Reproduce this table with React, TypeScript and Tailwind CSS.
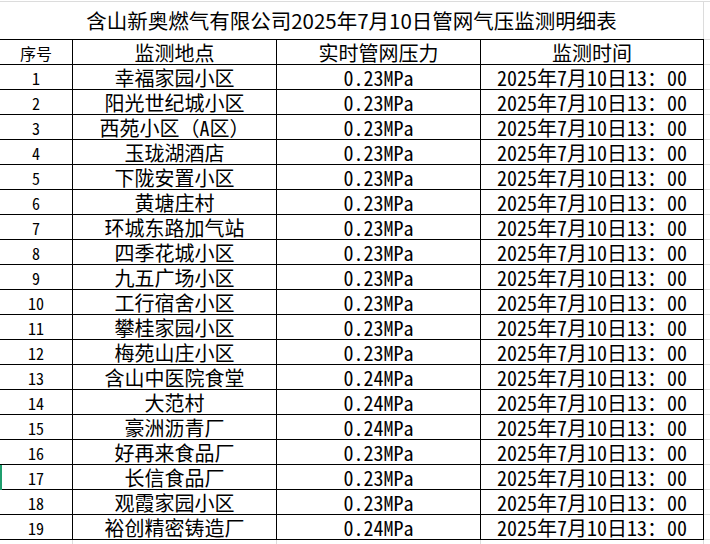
import React from "react";

const rows: [string, string][] = [
  ["幸福家园小区", "0.23"],
  ["阳光世纪城小区", "0.23"],
  ["西苑小区（A区）", "0.23"],
  ["玉珑湖酒店", "0.23"],
  ["下陇安置小区", "0.23"],
  ["黄塘庄村", "0.23"],
  ["环城东路加气站", "0.23"],
  ["四季花城小区", "0.23"],
  ["九五广场小区", "0.23"],
  ["工行宿舍小区", "0.23"],
  ["攀桂家园小区", "0.23"],
  ["梅苑山庄小区", "0.23"],
  ["含山中医院食堂", "0.24"],
  ["大范村", "0.24"],
  ["豪洲沥青厂", "0.24"],
  ["好再来食品厂", "0.23"],
  ["长信食品厂", "0.23"],
  ["观霞家园小区", "0.23"],
  ["裕创精密铸造厂", "0.24"],
];

const mono = "font-['Noto_Sans_Mono_CJK_SC','Noto_Sans_CJK_SC',sans-serif]";

export default function App() {
  return (
    <div className={`w-[710px] h-[544px] bg-white overflow-hidden text-black ${mono}`}>
      {/* title row */}
      <div className="flex h-[38px] border-t border-[#dcdcdc] mt-px">
        <div className="w-[704px] border-r border-[#dcdcdc] flex items-center justify-center text-[20.5px] leading-none font-['Noto_Sans_CJK_SC',sans-serif]">
          含山新奥燃气有限公司2025年7月10日管网气压监测明细表
        </div>
        <div className="flex-1" />
      </div>
      {/* header */}
      <div className="flex h-[26px]">
        <div className="flex w-[704px] border-t border-b border-black leading-none">
          <div className="w-[73px] border-r border-black flex items-center justify-center text-[16px] pt-[2px]">序号</div>
          <div className="w-[204px] border-r border-black flex items-center justify-center text-[20px] pt-[2px]">监测地点</div>
          <div className="w-[204px] border-r border-black flex items-center justify-center text-[20px] pt-[2px]">实时管网压力</div>
          <div className="w-[223px] border-r border-black flex items-center justify-center text-[20px] pt-[2px]">监测时间</div>
        </div>
        <div className="flex-1 flex flex-col justify-between">
          <div className="h-px bg-[#dcdcdc]" />
          <div className="h-px bg-[#dcdcdc]" />
        </div>
      </div>
      {rows.map(([name, p], i) => (
        <div key={i} className="flex h-[25px] relative">
          {i === 16 && <span className="absolute left-0 top-0 w-[2px] h-[25px] bg-[#1f9e6e]" />}
          <div className="flex w-[704px] border-b border-black leading-none">
            <div className="w-[73px] border-r border-black flex items-center justify-center text-[16px] pt-[2px]">{i + 1}</div>
            <div className="w-[204px] border-r border-black flex items-center justify-center text-[20px] pt-[2px]">{name}</div>
            <div className="w-[204px] border-r border-black flex items-center justify-center text-[20px] pt-[2px]">{p}MPa</div>
            <div className="w-[223px] border-r border-black flex items-center justify-center text-[20px] pt-[2px]">2025年7月10日13：00</div>
          </div>
          <div className="flex-1 flex flex-col justify-end">
            <div className="h-px bg-[#dcdcdc]" />
          </div>
        </div>
      ))}
      {/* below table gridlines */}
      <div className="flex h-[10px]">
        <div className="w-[73px] border-r border-[#dcdcdc]" />
        <div className="w-[204px] border-r border-[#dcdcdc]" />
        <div className="w-[204px] border-r border-[#dcdcdc]" />
        <div className="w-[223px] border-r border-[#dcdcdc]" />
      </div>
    </div>
  );
}
